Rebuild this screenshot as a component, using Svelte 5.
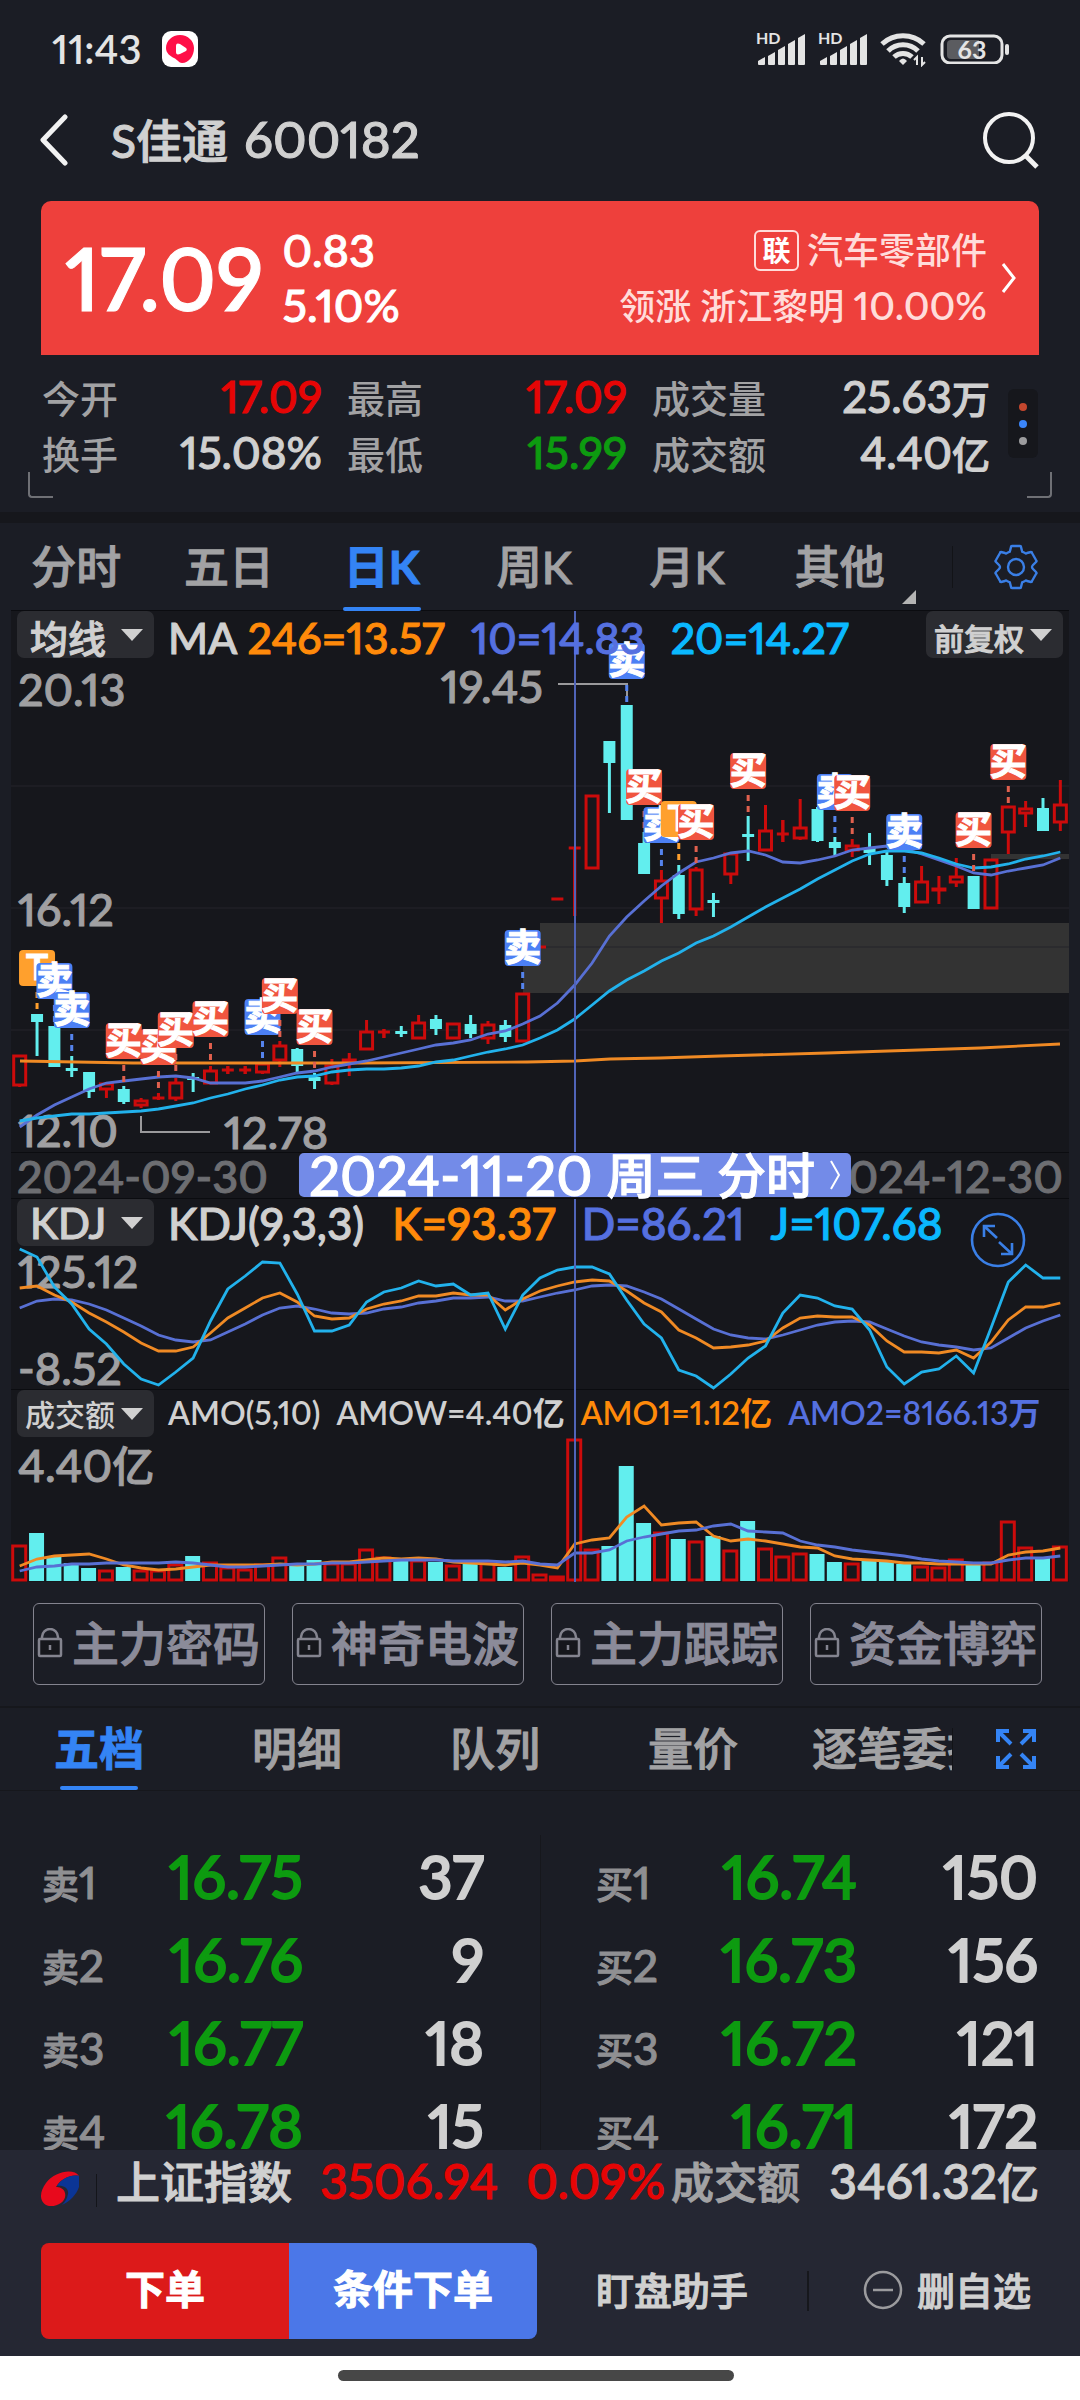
<script lang="ts">
  type Candle = [dir: 'u' | 'd', top: number, bottom: number, high: number, low: number];
  type Mark = [index: number, kind: 'buy' | 'sell' | 't', top: number];

  const STEP = 17.344;
  const FIRST = 8.7;
  const x = (i: number) => FIRST + i * STEP;
  const line = (ys: number[]) => ys.map((y, i) => `${x(i).toFixed(1)},${y}`).join(' ');

  const stats = [
    { label: '今开', value: '17.09', unit: '', tone: 'up' },
    { label: '最高', value: '17.09', unit: '', tone: 'up' },
    { label: '成交量', value: '25.63', unit: '万', tone: '' },
    { label: '换手', value: '15.08%', unit: '', tone: '' },
    { label: '最低', value: '15.99', unit: '', tone: 'down' },
    { label: '成交额', value: '4.40', unit: '亿', tone: '' }
  ];

  const periods = ['分时', '五日', '日K', '周K', '月K', '其他'];
  const bookTabs = ['五档', '明细', '队列', '量价', '逐笔委托'];
  const locked = ['主力密码', '神奇电波', '主力跟踪', '资金博弈'];

  let period = $state('日K');
  let bookTab = $state('五档');

  const book = [
    [
      ['卖1', '16.75', '37'],
      ['卖2', '16.76', '9'],
      ['卖3', '16.77', '18'],
      ['卖4', '16.78', '15']
    ],
    [
      ['买1', '16.74', '150'],
      ['买2', '16.73', '156'],
      ['买3', '16.72', '121'],
      ['买4', '16.71', '172']
    ]
  ];

  const candles: Candle[] = [
    ['u', 444, 475, 444, 476], ['d', 403, 411, 403, 445], ['d', 415, 456, 415, 456],
    ['d', 457, 460, 445, 466], ['d', 461, 481, 461, 487], ['u', 472, 479, 472, 487],
    ['d', 478, 491, 475, 493], ['u', 489, 495, 487, 497], ['u', 487, 488, 482, 489],
    ['u', 471, 488, 467, 490], ['d', 466, 469, 462, 481], ['u', 459, 473, 455, 473],
    ['u', 459, 460, 455, 463], ['u', 459, 460, 455, 463], ['u', 452, 462, 452, 463],
    ['u', 434, 450, 430, 456], ['d', 438, 455, 437, 461], ['d', 466, 470, 462, 478],
    ['u', 454, 473, 448, 474], ['u', 448, 452, 442, 465], ['u', 420, 439, 409, 439],
    ['u', 421, 422, 418, 427], ['d', 420, 423, 415, 426], ['u', 411, 428, 404, 428],
    ['d', 408, 418, 404, 424], ['u', 412, 428, 412, 428], ['d', 413, 423, 404, 427],
    ['u', 413, 428, 410, 433], ['d', 414, 426, 409, 431], ['u', 382, 431, 382, 431],
    ['u', 336, 337, 336, 337], ['u', 288, 289, 288, 289], ['u', 237, 238, 237, 305],
    ['u', 184, 258, 184, 258], ['d', 130, 152, 130, 202], ['d', 94, 209, 94, 209],
    ['d', 232, 263, 221, 263], ['u', 269, 288, 259, 312], ['d', 264, 303, 254, 308],
    ['u', 258, 299, 256, 305], ['d', 289, 292, 282, 306], ['u', 242, 264, 242, 273],
    ['d', 223, 226, 205, 250], ['u', 219, 240, 194, 240], ['u', 223, 224, 209, 231],
    ['u', 216, 228, 188, 229], ['d', 198, 230, 196, 231], ['d', 231, 237, 226, 245],
    ['u', 234, 240, 228, 246], ['d', 237, 242, 222, 254], ['d', 244, 269, 241, 275],
    ['d', 272, 296, 266, 302], ['u', 270, 292, 255, 292], ['u', 277, 280, 265, 293],
    ['u', 265, 272, 247, 276], ['d', 265, 298, 265, 298], ['u', 248, 298, 248, 298],
    ['u', 195, 222, 195, 243], ['u', 197, 203, 190, 216], ['d', 197, 220, 187, 220],
    ['u', 193, 212, 169, 220]
  ];

  const ma246 = '9,450 122,452 349,452 516,451 564,450 599,448 649,447 709,445 816,442 969,437 1049,433';
  const ma10 = [
    516, 504, 494, 486, 478, 472, 470, 468, 466, 465, 467, 472, 472, 472, 470, 466, 462, 460, 456, 453,
    450, 446, 442, 438, 434, 432, 429, 423, 420, 413, 405, 392, 374, 352, 325, 306, 290, 275, 262, 251,
    247, 242, 240, 244, 251, 252, 249, 245, 239, 237, 235, 238, 243, 249, 255, 262, 264, 260, 257, 254, 247
  ];
  const ma20 = [
    510, 507, 505, 503, 503, 502, 501, 500, 498, 495, 492, 487, 483, 478, 474, 469, 466, 465, 461, 459,
    458, 458, 457, 455, 451, 449, 445, 441, 438, 434, 427, 419, 408, 394, 380, 369, 360, 350, 342, 332,
    325, 316, 306, 296, 287, 278, 268, 259, 250, 243, 240, 240, 242, 247, 253, 257, 256, 253, 248, 245, 241
  ];

  const marks: Mark[] = [
    [1, 't', 339], [2, 'sell', 352], [3, 'sell', 381], [6, 'buy', 412], [8, 'buy', 418],
    [9, 'buy', 401], [11, 'buy', 390], [14, 'sell', 388], [15, 'buy', 367], [17, 'buy', 398],
    [29, 'sell', 319], [35, 'sell', 32], [36, 'buy', 158], [37, 'sell', 196], [38, 't', 190],
    [39, 'buy', 193], [42, 'buy', 142], [47, 'sell', 163], [48, 'buy', 164], [51, 'sell', 203],
    [55, 'buy', 201], [57, 'buy', 133]
  ];
  const glyph = { buy: '买', sell: '卖', t: 'T' };

  const kLine = [
    89, 87, 96, 103, 114, 123, 133, 144, 152, 152, 148, 134, 119, 109, 99, 94, 103, 117, 120, 119,
    110, 105, 102, 97, 97, 94, 96, 96, 111, 100, 92, 87, 83, 81, 82, 92, 104, 113, 131, 139,
    149, 148, 146, 142, 129, 119, 117, 118, 118, 126, 142, 153, 153, 154, 151, 159, 143, 121, 108, 108, 104
  ];
  const dLine = [
    109, 102, 100, 101, 105, 111, 119, 127, 136, 141, 143, 141, 133, 125, 116, 109, 107, 110, 114, 115,
    114, 110, 108, 104, 102, 99, 99, 98, 102, 102, 98, 94, 91, 87, 86, 87, 93, 100, 110, 120,
    130, 136, 139, 140, 136, 131, 126, 123, 122, 123, 130, 137, 143, 146, 148, 151, 149, 139, 129, 122, 116
  ];
  const jLine = [
    50, 58, 88, 105, 130, 145, 165, 180, 186, 173, 159, 122, 90, 77, 63, 64, 95, 132, 132, 126,
    103, 93, 89, 82, 87, 85, 96, 94, 130, 96, 79, 71, 68, 68, 75, 101, 125, 139, 171, 177,
    189, 175, 159, 147, 114, 96, 99, 107, 110, 131, 168, 185, 173, 170, 157, 174, 129, 83, 66, 79, 79
  ];

  const AMO_BASE = 191;
  const amoDirs = 'udddduduuuduuuuudduuuududududuuuuudddudududuuudduddduuuduuudu';
  const amoTops = [
    155, 143, 167, 173, 178, 180, 177, 180, 180, 174, 166, 172, 177, 179, 174, 167, 174, 170, 173, 173,
    159, 167, 171, 170, 172, 175, 174, 172, 177, 166, 184, 186, 49, 159, 156, 76, 133, 142, 149, 151,
    146, 160, 131, 158, 166, 163, 164, 172, 173, 171, 172, 174, 176, 177, 169, 174, 172, 131, 157, 167, 156
  ];
  const amo1 = [
    176, 169, 166, 165, 164, 169, 175, 178, 180, 179, 177, 175, 175, 175, 175, 174, 175, 174, 172, 172,
    170, 168, 169, 168, 169, 172, 173, 174, 175, 173, 175, 178, 154, 150, 148, 127, 116, 135, 133, 132,
    146, 151, 149, 151, 154, 157, 158, 166, 169, 170, 171, 173, 173, 174, 174, 174, 174, 165, 162, 161, 158
  ];
  const amo2 = [
    181, 177, 176, 174, 174, 173, 173, 173, 173, 172, 173, 175, 177, 177, 176, 175, 174, 174, 173, 173,
    172, 171, 170, 170, 170, 171, 171, 171, 172, 171, 174, 175, 163, 163, 160, 151, 147, 144, 141, 140,
    136, 134, 141, 142, 143, 151, 155, 157, 160, 162, 164, 166, 169, 171, 172, 173, 173, 170, 168, 168, 166
  ];
</script>

{#snippet picker(name: string, options: string[], small: boolean)}
  <label class="picker" class:picker--small={small}>
    <select aria-label={name}>
      {#each options as option (option)}
        <option>{option}</option>
      {/each}
    </select>
    <svg class="picker-arrow" viewBox="0 0 22 12"><path d="M0 0h22L11 12z" /></svg>
  </label>
{/snippet}

{#snippet signal()}
  <span class="signal">
    <span class="hd">HD</span>
    <svg viewBox="0 0 50 34" width="50" height="34">
      {#each [8, 13, 19, 25, 31] as h, i (h)}
        <path d="M{2 + i * 10} {33 - h + 4}l7-4v{h - 1}q0 1-1 1h-5q-1 0-1-1z" />
      {/each}
    </svg>
  </span>
{/snippet}

<div class="app">
  <div class="status">
    <span class="clock">11:43</span>
    <svg class="app-icon" viewBox="0 0 36 36">
      <rect width="36" height="36" rx="9" fill="#fff" />
      <path d="M18 4c8 0 14 6 14 13 0 8-5 15-12 15-3 0-4-3-8-5-4-2-8-5-8-10C4 10 10 4 18 4z" fill="#ff0f47" />
      <path d="M14 15c0-3 2-3 4-2l6 4c1 1 1 2 0 3l-6 3c-3 1-4 0-4-2z" fill="#fff" />
    </svg>
    <span class="status-right">
      {@render signal()}
      {@render signal()}
      <svg viewBox="0 0 48 36" width="48" height="36" fill="none" stroke="#e4e4e4" stroke-width="5">
        <path d="M2 13a31 31 0 0 1 42 0" />
        <path d="M8 20a21 21 0 0 1 30 0" />
        <path d="M14 26a13 13 0 0 1 18 0" />
        <path d="m23 34-4-4q4-5 8 0z" fill="#e4e4e4" stroke="none" />
        <path d="M37 34v-8l-3 3M42 26v8l3-3" stroke-width="2" />
      </svg>
      <svg viewBox="0 0 70 30" width="70" height="30">
        <rect x="2" y="2" width="60" height="27" rx="8" fill="none" stroke="#e4e4e4" stroke-width="3" />
        <path d="M39 6v19H11q-4 0-4-4V10q0-4 4-4z" fill="#5b5c60" />
        <rect x="65" y="10" width="4" height="11" rx="2" fill="#e4e4e4" />
        <text class="level" x="32" y="25" text-anchor="middle">63</text>
      </svg>
    </span>
  </div>

  <header class="nav">
    <button class="icon-btn" aria-label="返回">
      <svg viewBox="0 0 28 52" width="28" height="52"><path d="M25 3 3 26l22 23" fill="none" stroke="#f2f2f2" stroke-width="5" stroke-linecap="round" stroke-linejoin="round" /></svg>
    </button>
    <h1><span class="name">S佳通</span> <span class="code">600182</span></h1>
    <button class="icon-btn search" aria-label="搜索">
      <svg viewBox="0 0 58 58" width="58" height="58" fill="none" stroke="#f2f2f2" stroke-width="4"><circle cx="28" cy="27" r="24" /><path d="m44 44 12 12" stroke-width="5" /></svg>
    </button>
  </header>

  <section class="quote">
    <strong class="price">17.09</strong>
    <div class="change"><span>0.83</span><span>5.10%</span></div>
    <a class="sector" href="#sector">
      <span class="sector-name"><span class="tag">联</span>汽车零部件</span>
      <span class="sector-lead">领涨 浙江黎明 <span class="num">10.00%</span></span>
    </a>
    <svg viewBox="0 0 16 32" width="16" height="32"><path d="m2 2 11 14L2 30" fill="none" stroke="#fff" stroke-width="3" /></svg>
  </section>

  <section class="stats">
    <dl>
      {#each stats as stat (stat.label)}
        <div>
          <dt>{stat.label}</dt>
          <dd class={stat.tone}>{stat.value}<span class="unit">{stat.unit}</span></dd>
        </div>
      {/each}
    </dl>
    <button class="more" aria-label="更多"><i></i><i></i><i></i></button>
  </section>
  <div class="corners"><span></span><span></span></div>

  <nav class="periods">
    <div class="period-list">
      {#each periods as item (item)}
        <button class="tab" class:active={item === period} onclick={() => (period = item)}>
          {item}
          {#if item === '其他'}
            <svg class="fold" viewBox="0 0 14 14"><path d="M14 0v14H0z" /></svg>
          {/if}
        </button>
      {/each}
    </div>
    <button class="side-btn" aria-label="设置">
      <svg viewBox="0 0 46 46" width="46" height="46" fill="none" stroke="#3a7fe6" stroke-width="2.4" stroke-linejoin="round">
        <path d="M19 2h8q1 0 1 1l1 4q0 1 1 1l2 1q1 1 2 0l4-1q1 0 1 1l4 7q1 1 0 2l-3 3q-1 1-1 2t1 2l3 3q1 1 0 2l-4 7q0 1-1 1l-4-1q-1-1-2 0l-2 1q-1 0-1 1l-1 4q0 1-1 1h-8q-1 0-1-1l-1-4q0-1-1-1l-2-1q-1-1-2 0l-4 1q-1 0-1-1l-4-7q-1-1 0-2l3-3q1-1 1-2t-1-2l-3-3q-1-1 0-2l4-7q0-1 1-1l4 1q1 1 2 0l2-1q1 0 1-1l1-4q0-1 1-1z" />
        <circle cx="23" cy="23" r="8" />
      </svg>
    </button>
  </nav>

  <main class="charts">
    <div class="panel">
      <svg class="plot" viewBox="0 0 1058 541">
        {#each [175, 297, 419] as y (y)}
          <path class="grid" d="M0 {y}h1058" />
        {/each}
        <path d="M529 312h529v70H512v-32h17zM980 243h78v5h-78z" fill="#333" />
        <path class="grid" d="M529 336h529" />
        <text class="axis" x="7" y="95">20.13</text>
        <text class="axis" x="7" y="315">16.12</text>
        <text class="axis" x="7" y="536">12.10</text>
        <text class="axis" x="213" y="538">12.78</text>
        <text class="axis" x="532" y="92" text-anchor="end">19.45</text>
        <path class="lead" d="M547 73h69v16M130 505v16h69" />
        {#each candles as [dir, top, bottom, high, low], i (i)}
          {#if dir === 'd'}
            <path d="M{x(i)} {high}V{low}" stroke="#62eeee" stroke-width="3" />
            <rect x={x(i) - 6} y={top} width="12" height={bottom - top} fill="#62eeee" />
          {:else}
            <path d="M{x(i)} {high}V{top}M{x(i)} {bottom}V{low}" class="rise" />
            {#if bottom - top < 3}
              <path d="M{x(i) - 6} {top}h12" class="rise" />
              <path d="M{x(i)} {high}V{low}" class="rise" />
            {:else}
              <rect x={x(i) - 6} y={top + 1} width="12" height={bottom - top - 2} class="rise" />
            {/if}
          {/if}
        {/each}
        <polyline class="curve orange" points={ma246} />
        <polyline class="curve indigo" points={line(ma10)} />
        <polyline class="curve sky" points={line(ma20)} />
        <path class="cross" d="M564 0v541" />
        {#each marks as [i, kind, top] (i)}
          <g class="mark {kind}">
            <path d="M{x(i)} {top + 42}v18" stroke-width="3" stroke-dasharray="6 5" />
            <rect x={x(i) - 18} y={top} width="36" height="36" rx="4" />
            <text x={x(i)} y={kind === 't' ? top + 30 : top + 31} text-anchor="middle">{glyph[kind]}</text>
          </g>
        {/each}
      </svg>
      <div class="legend">
        {@render picker('主图指标', ['均线', 'BOLL'], false)}
        <span>MA</span>
        <span class="orange">246=13.57</span>
        <span class="indigo">10=14.83</span>
        <span class="sky">20=14.27</span>
        <span class="push">{@render picker('复权方式', ['前复权', '不复权', '后复权'], true)}</span>
      </div>
    </div>

    <div class="dates">
      <span>2024-09-30</span>
      <span>2024-12-30</span>
      <button class="date-pill">2024-11-20 <span>周三 分时</span>
        <svg viewBox="0 0 12 32" width="12" height="32"><path d="m2 2 8 14-8 14" fill="none" stroke="#fff" stroke-width="2" /></svg>
      </button>
    </div>

    <div class="panel">
      <svg class="plot" viewBox="0 0 1058 191">
        <text class="axis" x="7" y="89">125.12</text>
        <text class="axis" x="7" y="186">-8.52</text>
        <polyline class="curve indigo" points={line(dLine)} />
        <polyline class="curve orange" points={line(kLine)} />
        <polyline class="curve sky" points={line(jLine)} />
        <path class="cross" d="M564 0v191" />
      </svg>
      <div class="legend legend--kdj">
        {@render picker('副图指标', ['KDJ', 'MACD'], false)}
        <span>KDJ(9,3,3)</span>
        <span class="orange">K=93.37</span>
        <span class="indigo">D=86.21</span>
        <span class="sky">J=107.68</span>
        <button class="icon-btn expand" aria-label="放大">
          <svg viewBox="0 0 56 56" width="56" height="56" fill="none" stroke="#3a7fe6" stroke-width="2.6">
            <circle cx="28" cy="28" r="26" />
            <path d="M14 25V14h11M14 14l13 12M42 31v11H31M42 42 29 30" />
          </svg>
        </button>
      </div>
    </div>

    <div class="panel">
      <svg class="plot" viewBox="0 0 1058 192">
        <text class="axis" x="7" y="92">4.40<tspan class="axis-unit">亿</tspan></text>
        {#each amoTops as top, i (i)}
          {#if amoDirs[i] === 'd'}
            <rect x={x(i) - 8} y={top} width="15" height={AMO_BASE - top} fill="#62eeee" />
          {:else}
            <rect x={x(i) - 7} y={top + 1} width="13" height={AMO_BASE - top - 2} class="rise" />
          {/if}
        {/each}
        <polyline class="curve orange" points={line(amo1)} />
        <polyline class="curve indigo" points={line(amo2)} />
        <path class="cross" d="M564 0v192" />
      </svg>
      <div class="legend legend--amo">
        {@render picker('成交指标', ['成交额', '成交量'], true)}
        <span>AMO(5,10)</span>
        <span>AMOW=4.40亿</span>
        <span class="orange">AMO1=1.12亿</span>
        <span class="indigo">AMO2=8166.13万</span>
      </div>
    </div>
  </main>

  <div class="locked">
    {#each locked as item (item)}
      <button>
        <svg viewBox="0 0 26 30" width="26" height="30" fill="none" stroke="#84848f" stroke-width="2.5">
          <path d="M5 11V9a8 8 0 0 1 16 0v2" />
          <rect x="2" y="11" width="22" height="17" rx="1" fill="#16171c" />
          <path d="M13 17v5" />
        </svg>
        {item}
      </button>
    {/each}
  </div>

  <nav class="book-tabs">
    <div class="book-list">
      {#each bookTabs as item (item)}
        <button class="tab" class:active={item === bookTab} onclick={() => (bookTab = item)}>{item}</button>
      {/each}
    </div>
    <button class="side-btn" aria-label="全屏">
      <svg viewBox="0 0 40 40" width="40" height="40" fill="none" stroke="#3484f5" stroke-width="4">
        <path d="M2 13V2h11M2 2l13 13M27 2h11v11M38 2 25 15M2 27v11h11M2 38l13-13M38 27v11H27M38 38 25 25" />
      </svg>
    </button>
  </nav>

  <section class="book">
    {#each book as side, i (i)}
      <table>
        <tbody>
          {#each side as [label, price, volume] (label)}
            <tr>
              <th scope="row">{label[0]}<span>{label[1]}</span></th>
              <td class="down">{price}</td>
              <td>{volume}</td>
            </tr>
          {/each}
        </tbody>
      </table>
    {/each}
  </section>

  <footer>
    <div class="index">
      <svg viewBox="0 0 38 36" width="38" height="36">
        <path d="M38 5C33-3 14 0 5 12-3 23-1 33 8 35c9 1 18-5 16-13-1-5-6-6-9-6C19 9 29 3 38 5z" fill="#e8091c" />
        <path d="M38 5C30 3 20 8 16 15c6-1 12 2 11 8-1 5-3 8-6 11 12-5 21-19 17-29z" fill="#0b3596" />
      </svg>
      <span class="index-name">上证指数</span>
      <span class="num up">3506.94</span>
      <span class="num up">0.09%</span>
      <span class="index-label">成交额</span>
      <span class="num turnover">3461.32<span class="unit">亿</span></span>
    </div>
    <div class="actions">
      <button class="order">下单</button>
      <button class="cond">条件下单</button>
      <button class="plain">盯盘助手</button>
      <button class="plain">
        <svg viewBox="0 0 40 40" width="40" height="40" fill="none" stroke="#9b9b9e" stroke-width="2.5"><circle cx="20" cy="20" r="18" /><path d="M10 20h20" /></svg>
        删自选
      </button>
    </div>
  </footer>
  <div class="home"><span></span></div>
</div>

<style>
  :global(body) {
    background: #1b1d25;
  }

  .app {
    --ink: #d0d0d0;
    --dim: #a2a2a4;
    --blue: #3484f5;
    display: flex;
    flex-direction: column;
    height: 100vh;
    min-height: 1900px;
    background: #1b1d25;
    color: var(--ink);
    font-family: Lato, 'Noto Sans CJK SC', sans-serif;
    font-weight: 500;
    font-variant-numeric: proportional-nums;
    -webkit-text-stroke: 1px;
  }

  button,
  select {
    margin: 0;
    padding: 0;
    border: 0;
    background: none;
    color: inherit;
    font: inherit;
    cursor: pointer;
  }

  svg {
    display: block;
    flex: none;
  }

  .orange {
    color: #ff8a0a;
    stroke: #f08a24;
  }

  .indigo {
    color: #5570e0;
    stroke: #5870d4;
  }

  .sky {
    color: #0ab8ff;
    stroke: #22b2ec;
  }

  dd.up,
  .up {
    color: #e60505;
  }

  dd.down,
  .down {
    color: #0d9b10;
  }

  .icon-btn {
    display: flex;
  }

  .status {
    display: flex;
    align-items: center;
    height: 98px;
    padding: 0 70px 0 52px;
    color: #e4e4e4;
    -webkit-text-stroke: 0;
  }

  .clock {
    font-size: 40px;
    font-weight: 600;
  }

  .app-icon {
    width: 36px;
    margin-left: 20px;
  }

  .status-right {
    display: flex;
    align-items: center;
    gap: 12px;
    margin-left: auto;
  }

  .signal {
    display: grid;
    fill: #e4e4e4;
  }

  .signal > * {
    grid-area: 1 / 1;
  }

  .hd {
    font-size: 16px;
    font-weight: 700;
    line-height: 12px;
  }

  .level {
    fill: #e4e4e4;
    font-size: 25px;
    font-weight: 700;
  }

  .nav {
    display: flex;
    align-items: center;
    height: 84px;
    padding: 0 41px 0 40px;
  }

  h1 {
    display: flex;
    align-items: baseline;
    gap: 16px;
    margin: 0 0 0 43px;
    font-weight: 500;
    line-height: 60px;
  }

  .name {
    font-size: 46px;
  }

  .code {
    font-size: 51px;
  }

  .search {
    margin-left: auto;
  }

  .quote {
    display: flex;
    align-items: center;
    height: 154px;
    margin: 19px 41px 0;
    padding: 0 22px 0 24px;
    box-sizing: border-box;
    border-radius: 10px 10px 0 0;
    background: #ee403c;
    color: #fff;
  }

  .price {
    font-size: 86px;
    font-weight: 600;
    line-height: 100px;
  }

  .change {
    display: flex;
    flex-direction: column;
    margin-left: 19px;
    font-size: 45px;
    line-height: 55px;
  }

  .sector {
    display: flex;
    flex-direction: column;
    align-items: flex-end;
    margin: 0 14px 0 auto;
    color: #ffdcda;
    font-size: 36px;
    line-height: 55px;
    text-decoration: none;
    -webkit-text-stroke: 0;
  }

  .sector-name {
    display: flex;
    align-items: center;
    gap: 8px;
  }

  .sector .num {
    font-size: 39px;
    font-weight: 600;
  }

  .tag {
    box-sizing: border-box;
    width: 45px;
    height: 41px;
    border: 2px solid #ffdcda;
    border-radius: 6px;
    color: #fff;
    font-size: 28px;
    font-weight: 700;
    line-height: 36px;
    text-align: center;
  }

  .stats {
    display: flex;
    align-items: center;
    gap: 18px;
    height: 137px;
    padding: 0 42px;
  }

  dl {
    display: grid;
    grid-template-columns: 280fr 280fr 338fr;
    column-gap: 25px;
    flex: 1;
    margin: 0;
  }

  dl div {
    display: flex;
    align-items: baseline;
    justify-content: space-between;
    height: 56px;
    line-height: 56px;
  }

  dt {
    color: var(--dim);
    font-size: 38px;
    -webkit-text-stroke: 0;
  }

  dd {
    margin: 0;
    color: var(--ink);
    font-size: 44px;
  }

  dd .unit {
    font-size: 38px;
  }

  .more {
    display: flex;
    flex-direction: column;
    align-items: center;
    justify-content: center;
    gap: 9px;
    width: 30px;
    height: 69px;
    border-radius: 6px;
    background: #16171c;
  }

  .more i {
    width: 8px;
    height: 8px;
    border-radius: 50%;
    background: #c4472e;
  }

  .more i:nth-child(2) {
    background: #3b86fa;
  }

  .more i:nth-child(3) {
    background: #9c9c9e;
  }

  .corners {
    display: flex;
    justify-content: space-between;
    height: 30px;
    margin-top: -20px;
    padding: 0 28px 10px;
    border-bottom: 11px solid #16171c;
  }

  .corners span {
    width: 23px;
    height: 24px;
    border: solid #6f7075;
    border-width: 0 0 2px 2px;
    border-radius: 0 0 0 4px;
  }

  .corners span + span {
    border-width: 0 2px 2px 0;
    border-radius: 0 0 4px 0;
  }

  .periods,
  .book-tabs {
    display: flex;
    height: 88px;
  }

  .period-list,
  .book-list {
    display: flex;
    flex: 1;
    min-width: 0;
  }

  .period-list {
    padding-right: 36px;
  }

  .tab {
    position: relative;
    flex: 1 0 0;
    color: var(--dim);
    font-size: 45px;
    line-height: 84px;
    white-space: nowrap;
  }

  .tab.active {
    color: var(--blue);
    font-weight: 700;
  }

  .tab.active::after {
    content: '';
    position: absolute;
    bottom: 0;
    left: calc(50% - 39px);
    width: 78px;
    height: 4px;
    border-radius: 2px;
    background: currentColor;
  }

  .fold {
    position: absolute;
    right: 0;
    bottom: 7px;
    width: 14px;
    fill: #b4b4b4;
  }

  .side-btn {
    display: flex;
    align-items: center;
    justify-content: center;
    width: 128px;
    background: linear-gradient(#121317, #121317) left center / 1px 42px no-repeat;
  }

  .charts {
    margin: 0 11px;
    background: #16171c;
  }

  .panel {
    display: grid;
    border-top: 1px solid #0b0c10;
    margin-top: -1px;
  }

  .plot,
  .legend {
    grid-area: 1 / 1;
    width: 100%;
  }

  .legend {
    display: flex;
    align-items: flex-start;
    box-sizing: border-box;
    height: 47px;
    padding: 0 6px;
    font-size: 43px;
    line-height: 54px;
  }

  .legend > span {
    margin-left: 14px;
    white-space: nowrap;
  }

  .legend > .indigo,
  .legend > .sky {
    margin-left: 26px;
  }

  .legend > .orange {
    margin-left: 10px;
  }

  .legend.legend--kdj {
    font-size: 44px;
    line-height: 48px;
  }

  .legend.legend--kdj > .orange {
    margin-left: 28px;
  }

  .legend > .push {
    margin-left: auto;
  }

  .legend.legend--amo {
    font-size: 32px;
    line-height: 46px;
    -webkit-text-stroke: 0;
  }

  .legend--amo > span {
    font-weight: 600;
  }

  .legend.legend--amo > span + span {
    margin-left: 16px;
  }

  .picker {
    display: grid;
    align-items: center;
    width: 137px;
    height: 47px;
    border-radius: 7px;
    background: #2b2c31;
  }

  .picker > * {
    grid-area: 1 / 1;
  }

  .picker select {
    width: 100%;
    height: 47px;
    padding-left: 13px;
    appearance: none;
    font-size: 38px;
  }

  .legend--kdj .picker select {
    font-size: 42px;
    line-height: 44px;
  }

  .picker--small select {
    padding-left: 8px;
    font-size: 30px;
  }

  .picker option {
    background: #2b2c31;
  }

  .picker-arrow {
    justify-self: end;
    width: 22px;
    margin-right: 11px;
    fill: var(--ink);
    pointer-events: none;
  }

  .expand {
    margin: 13px 37px 0 auto;
  }

  .dates {
    position: relative;
    display: flex;
    justify-content: space-between;
    height: 46px;
    padding: 0 6px;
    border-top: 1px solid #0b0c10;
    color: #6d6e72;
    font-size: 45px;
    line-height: 46px;
  }

  .date-pill {
    position: absolute;
    top: 0;
    left: 53.3%;
    display: flex;
    align-items: center;
    gap: 14px;
    height: 44px;
    padding: 0 10px;
    border-radius: 5px;
    background: #738be8;
    color: #fff;
    font-size: 55px;
    line-height: 44px;
    white-space: nowrap;
    transform: translateX(-50%);
  }

  .date-pill span {
    font-size: 49px;
  }

  .plot text {
    fill: #a0a0a2;
    stroke: none;
  }

  .plot .axis {
    font-size: 45px;
    stroke: #a0a0a2;
  }

  .axis-unit {
    font-size: 42px;
  }

  .grid {
    stroke: #24252a;
    stroke-width: 1;
  }

  .lead {
    fill: none;
    stroke: #9a9a9c;
    stroke-width: 2;
  }

  .rise {
    fill: none;
    stroke: #cc0b0b;
    stroke-width: 3;
  }

  .curve {
    fill: none;
    stroke-width: 2.8;
  }

  .cross {
    stroke: #5064b8;
    stroke-width: 2;
  }

  .plot .mark text {
    fill: #fff;
    stroke: #fff;
    font-size: 37px;
    font-weight: 700;
  }

  .mark.buy {
    fill: #f0553f;
    stroke: #e0604e;
  }

  .mark.sell {
    fill: #4c80f5;
    stroke: #5584ee;
  }

  .mark.t {
    fill: #ffa02d;
    stroke: #ffa02d;
  }

  .mark rect {
    stroke: none;
  }

  .locked {
    display: grid;
    grid-template-columns: repeat(4, 1fr);
    gap: 27px;
    padding: 21px 38px 21px 33px;
    border-bottom: 2px solid #16171c;
  }

  .locked button {
    display: flex;
    align-items: center;
    justify-content: space-between;
    height: 82px;
    padding: 0 4px 2px 3px;
    box-sizing: border-box;
    border: 1px solid #84848f;
    border-radius: 6px;
    color: #8b8b99;
    font-size: 47px;
    line-height: 60px;
    white-space: nowrap;
  }

  .book-tabs {
    height: 82px;
    border-bottom: 1px solid #16171c;
  }

  .book-list {
    overflow: hidden;
  }

  .book-list .tab {
    flex: 0 0 198px;
    line-height: 76px;
  }

  .book-list .tab:last-child {
    padding-left: 20px;
  }

  .book {
    display: grid;
    grid-template-columns: 1fr 1fr;
    flex: 1 1 0;
    min-height: 0;
    margin-top: 44px;
    overflow: hidden;
    background: linear-gradient(#16171c, #16171c) center / 1px 100% no-repeat;
  }

  table {
    width: calc(100% - 98px);
    height: max-content;
    margin-left: 42px;
    border-collapse: collapse;
    table-layout: fixed;
  }

  table + table {
    margin-left: 56px;
  }

  tr {
    height: 83px;
  }

  th {
    width: 90px;
    padding: 0;
    color: #8f8f92;
    font-size: 37px;
    font-weight: 500;
    text-align: left;
    vertical-align: baseline;
  }

  th span {
    font-size: 44px;
  }

  td {
    padding: 0;
    font-size: 59px;
    line-height: 83px;
    text-align: right;
    vertical-align: baseline;
    -webkit-text-stroke: 2px;
  }

  td.down {
    padding-right: 5px;
  }

  footer {
    padding: 0 41px 17px;
    background: #252733;
  }

  .index {
    display: flex;
    align-items: baseline;
    height: 93px;
    font-size: 44px;
    line-height: 62px;
    white-space: nowrap;
  }

  .index svg {
    align-self: flex-start;
    margin-top: 21px;
  }

  .index-name {
    margin-left: 17px;
    padding-left: 20px;
    background: linear-gradient(#14151a, #14151a) left 23px / 1px 33px no-repeat;
  }

  .index .num {
    margin-left: 28px;
    font-size: 48px;
  }

  .index .unit {
    font-size: 42px;
  }

  .index-label {
    margin-left: 6px;
    color: var(--dim);
    font-size: 43px;
  }

  .index .turnover {
    margin-left: auto;
  }

  .actions {
    display: grid;
    grid-template-columns: 248fr 248fr 270fr 232fr;
    height: 96px;
    font-size: 40px;
    line-height: 60px;
  }

  .order,
  .cond {
    padding-bottom: 4px;
    color: #fff;
    font-weight: 700;
  }

  .order {
    border-radius: 8px 0 0 8px;
    background: #dc1a1a;
  }

  .cond {
    border-radius: 0 8px 8px 0;
    background: #4b77e8;
  }

  .plain {
    display: flex;
    align-items: center;
    justify-content: center;
    gap: 14px;
    padding-bottom: 2px;
    font-size: 38px;
  }

  .plain:last-child {
    justify-content: flex-end;
    padding-right: 8px;
    background: linear-gradient(#16171c, #16171c) left center / 2px 40px no-repeat;
  }

  .home {
    display: flex;
    align-items: center;
    justify-content: center;
    box-sizing: border-box;
    height: 44px;
    padding: 0 8px 6px 0;
    background: #fff;
  }

  .home span {
    width: 37%;
    height: 11px;
    border-radius: 6px;
    background: #474747;
  }
</style>
